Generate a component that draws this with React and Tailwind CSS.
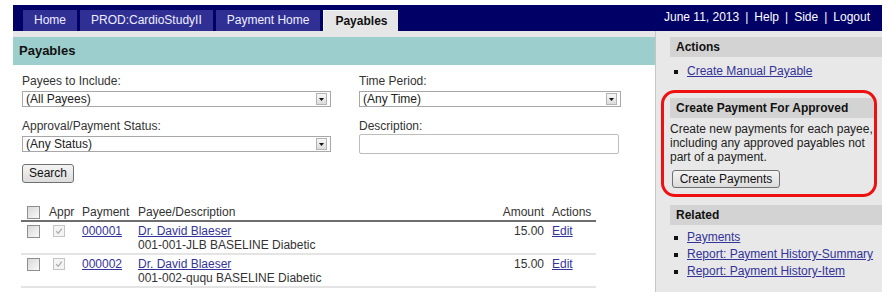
import React from "react";

const Check = () => (
  <span className="block w-[13px] h-[13px] border border-[#8e8f8f] bg-gradient-to-br from-[#d8d8d8] to-[#fafafa]" />
);

const CheckDis = () => (
  <span className="block w-[12px] h-[12px] border border-[#c4c4c4] bg-[#f4f4f4]">
    <svg viewBox="0 0 10 10" className="block w-full h-full">
      <path d="M2.2 5.2 L4.2 7.4 L7.8 2.6" stroke="#a9a9a9" strokeWidth="1.2" fill="none" />
    </svg>
  </span>
);

const Select = ({ value, w }) => (
  <div className={`${w} h-[16px] border border-[#a7a7a7] bg-white flex items-center justify-between`}>
    <span className="pl-[3px] leading-[14px] text-[#222]">{value}</span>
    <span className="mr-[3px] w-[11px] h-[12px] border border-[#b3b3b3] bg-gradient-to-b from-[#f7f7f7] to-[#dcdcdc] flex items-center justify-center">
      <svg width="5" height="3" viewBox="0 0 5 3" className="block">
        <path d="M0 0 L5 0 L2.5 3 Z" fill="#111" />
      </svg>
    </span>
  </div>
);

const Tab = ({ children, active }) => (
  <div
    className={
      active
        ? "h-[21px] px-[11px] leading-[21px] bg-[#e6e6e6] text-[#111] font-bold border-t border-l border-[#f4f4f4]"
        : "h-[21px] px-[11px] leading-[21px] bg-[#303094] text-[#eeeeff]"
    }
  >
    {children}
  </div>
);

const SideHeader = ({ children }) => (
  <div className="h-[20px] leading-[20px] bg-[#d3d3d3] pl-[6px] font-bold text-[#111]">{children}</div>
);

const Bullet = ({ children }) => (
  <div className="h-[17px] flex items-center">
    <span className="ml-[4px] mr-[9px] w-[4px] h-[4px] bg-[#111]" />
    <a className="text-[#333399] underline leading-[17px]" href="#">{children}</a>
  </div>
);

const rows = [
  { pay: "000001", desc: "001-001-JLB BASELINE Diabetic" },
  { pay: "000002", desc: "001-002-ququ BASELINE Diabetic" },
];

export default function App() {
  return (
    <div className="w-[888px] h-[292px] overflow-hidden bg-white pt-[5px] pl-[13px] pr-[6px] font-['Liberation_Sans',Arial,sans-serif] text-[12px] text-[#333]">
      <div className="flex h-[26px] bg-[#000066] justify-between">
        <div className="flex items-end gap-[3px] pl-[10px]">
          <Tab>Home</Tab>
          <Tab>PROD:CardioStudyII</Tab>
          <Tab>Payment Home</Tab>
          <Tab active>Payables</Tab>
        </div>
        <div className="pt-[4px] pr-[12px] leading-[16px] text-white flex">
          <span>June 11, 2013</span>
          <span className="mx-[6px]">|</span>
          <span>Help</span>
          <span className="mx-[6px]">|</span>
          <span>Side</span>
          <span className="mx-[6px]">|</span>
          <span>Logout</span>
        </div>
      </div>
      <div className="flex h-[261px] bg-[#e6e6e6]">
        <div className="w-[642px] flex flex-col pt-[6px]">
          <div className="h-[28px] leading-[28px] bg-[#9ccece] pl-[6px] text-[13px] font-bold text-[#111]">Payables</div>
          <div className="flex-1 bg-white pl-[9px] pt-[9px]">
            <div className="grid grid-cols-[309px_262px] gap-x-[28px]">
              <div>
                <div className="h-[14px] leading-[14px]">Payees to Include:</div>
                <div className="h-[20px] mt-[1px] flex items-center"><Select value="(All Payees)" w="w-[309px]" /></div>
              </div>
              <div>
                <div className="h-[14px] leading-[14px]">Time Period:</div>
                <div className="h-[20px] mt-[1px] flex items-center"><Select value="(Any Time)" w="w-[262px]" /></div>
              </div>
              <div className="mt-[10px]">
                <div className="h-[14px] leading-[14px]">Approval/Payment Status:</div>
                <div className="h-[20px] mt-[1px] flex items-center"><Select value="(Any Status)" w="w-[309px]" /></div>
              </div>
              <div className="mt-[10px]">
                <div className="h-[14px] leading-[14px]">Description:</div>
                <div className="h-[20px] mt-[1px] w-[260px] border border-[#bdbdbd] rounded-[2px] bg-white" />
              </div>
            </div>
            <button className="mt-[10px] h-[19px] w-[52px] border border-[#707070] rounded-[3px] bg-gradient-to-b from-[#f4f4f4] to-[#dcdcdc] text-[#111] leading-[17px]">Search</button>
            <div className="mt-[22px] ml-[-1px] w-[575px]">
              <div className="grid grid-cols-[25px_33px_56px_365px_47px_49px] h-[17px] items-center border-b-2 border-[#6e6e6e] leading-[15px]">
                <div className="pl-[6px]"><Check /></div>
                <div className="pl-[3px]">Appr</div>
                <div className="pl-[3px]">Payment</div>
                <div className="pl-[3px]">Payee/Description</div>
                <div className="text-right pr-[3px]">Amount</div>
                <div className="pl-[5px]">Actions</div>
              </div>
              {rows.map((r) => (
                <div key={r.pay} className="grid grid-cols-[25px_33px_56px_365px_47px_49px] items-start pt-[2px] pb-[1px] border-b-2 border-[#e4e4e4] leading-[14px]">
                  <div className="pl-[6px] h-[14px] flex items-center"><Check /></div>
                  <div className="pl-[7px] h-[14px] flex items-center"><CheckDis /></div>
                  <div className="pl-[3px]"><a href="#" className="text-[#333399] underline">{r.pay}</a></div>
                  <div className="pl-[3px]">
                    <div><a href="#" className="text-[#333399] underline">Dr. David Blaeser</a></div>
                    <div>{r.desc}</div>
                  </div>
                  <div className="text-right pr-[3px]">15.00</div>
                  <div className="pl-[5px]"><a href="#" className="text-[#333399] underline">Edit</a></div>
                </div>
              ))}
            </div>
          </div>
        </div>
        <div className="relative w-[227px] border-l border-[#c6c6c6] bg-[#e8e8e8] pl-[14px] pt-[6px] text-[#222]">
          <SideHeader>Actions</SideHeader>
          <div className="mt-[6px]">
            <Bullet>Create Manual Payable</Bullet>
          </div>
          <div className="mt-[18px] mr-[6px]">
            <SideHeader>Create Payment For Approved</SideHeader>
          </div>
          <p className="mt-[4px] leading-[14px]">
            Create new payments for each payee,
            <br />
            including any approved payables not
            <br />
            part of a payment.
          </p>
          <button className="mt-[6px] ml-[2px] h-[18px] w-[108px] border border-[#707070] rounded-[3px] bg-gradient-to-b from-[#f4f4f4] to-[#dcdcdc] text-[#111] leading-[16px]">Create Payments</button>
          <div className="mt-[17px]">
            <SideHeader>Related</SideHeader>
          </div>
          <div className="mt-[4px]">
            <Bullet>Payments</Bullet>
            <Bullet>Report: Payment History-Summary</Bullet>
            <Bullet>Report: Payment History-Item</Bullet>
          </div>
          <div className="absolute left-[5px] top-[59px] w-[216px] h-[107px] border-[3px] border-[#ee1111] rounded-[14px] pointer-events-none" />
        </div>
      </div>
    </div>
  );
}
